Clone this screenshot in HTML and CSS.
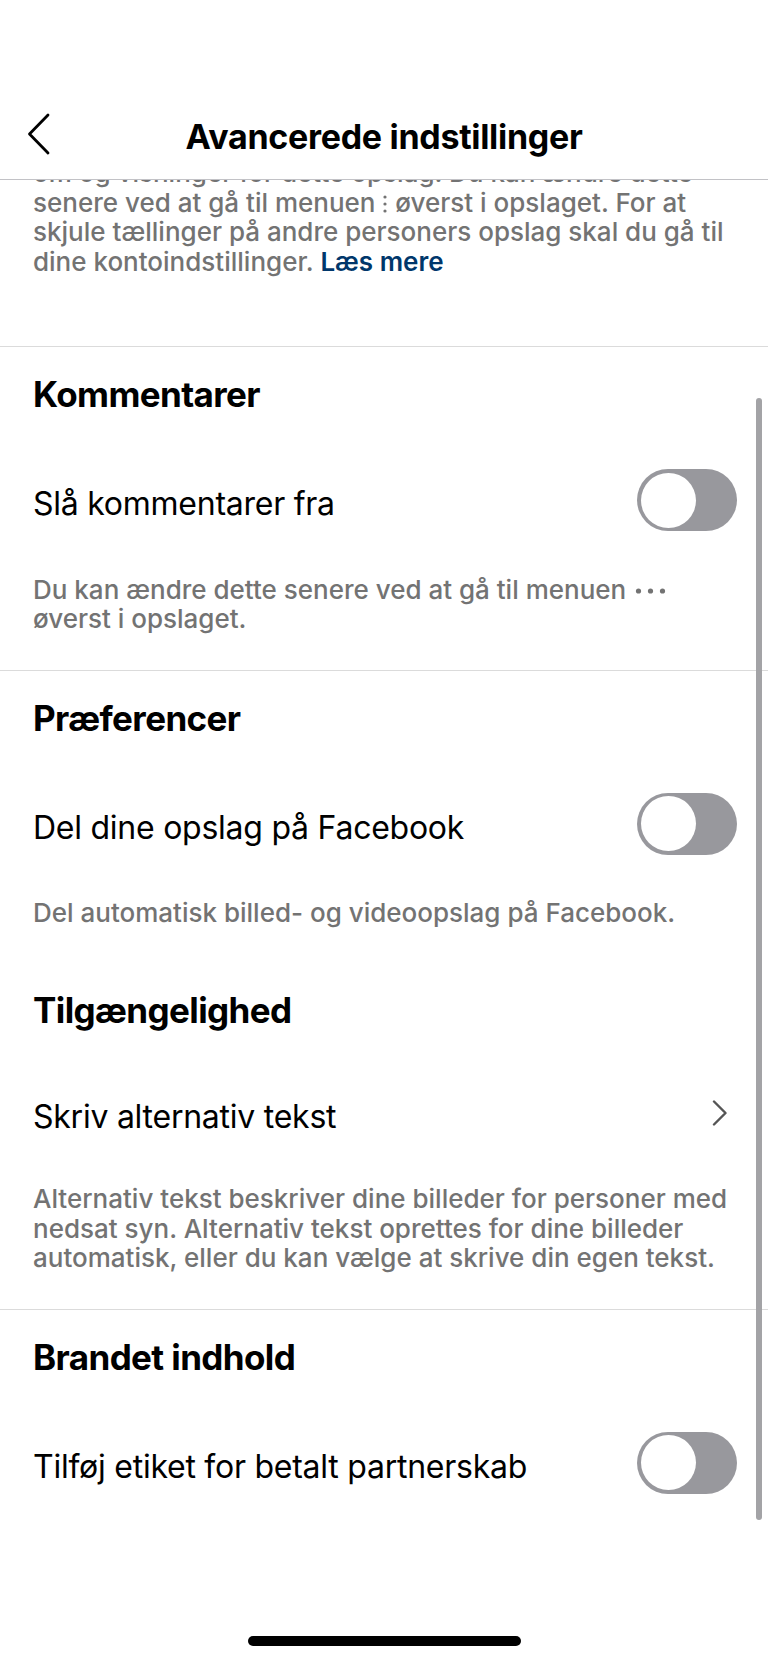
FILE: index.html
```html
<!DOCTYPE html>
<html lang="da">
<head>
<meta charset="utf-8">
<title>Avancerede indstillinger</title>
<link rel="stylesheet" href="styles.css">
</head>
<body>
<div class="screen">
  <div class="status"></div>
  <header class="nav">
    <div class="nav-side">
      <svg class="back" width="26" height="42" viewBox="0 0 26 42"><path d="M22 2 L3.5 21 L22 40" fill="none" stroke="#000" stroke-width="2.8" stroke-linecap="round" stroke-linejoin="round"/></svg>
    </div>
    <h1 class="nav-title">Avancerede indstillinger</h1>
    <div class="nav-side"></div>
  </header>

  <div class="intro">
    <p class="intro-text">om og visninger for dette opslag. Du kan ændre dette<br>senere ved at gå til menuen <svg class="vdots" width="6" height="20" viewBox="0 0 6 20"><circle cx="3" cy="3" r="1.6" fill="#737373"/><circle cx="3" cy="10" r="1.6" fill="#737373"/><circle cx="3" cy="17" r="1.6" fill="#737373"/></svg> øverst i opslaget. For at<br>skjule tællinger på andre personers opslag skal du gå til<br>dine kontoindstillinger. <a class="link">Læs mere</a></p>
  </div>

  <section class="section">
    <h2 class="heading">Kommentarer</h2>
    <div class="row">
      <span class="label">Slå kommentarer fra</span>
      <span class="toggle"><span class="knob"></span></span>
    </div>
    <p class="desc">Du kan ændre dette senere ved at gå til menuen <svg class="more" width="32" height="8" viewBox="0 0 32 8"><circle cx="3.5" cy="4" r="2.6" fill="#737373"/><circle cx="15.5" cy="4" r="2.6" fill="#737373"/><circle cx="27.5" cy="4" r="2.6" fill="#737373"/></svg><br>øverst i opslaget.</p>
  </section>

  <section class="section">
    <h2 class="heading">Præferencer</h2>
    <div class="row">
      <span class="label">Del dine opslag på Facebook</span>
      <span class="toggle"><span class="knob"></span></span>
    </div>
    <p class="desc">Del automatisk billed- og videoopslag på Facebook.</p>

    <h2 class="heading heading-sub">Tilgængelighed</h2>
    <div class="row row-link">
      <span class="label">Skriv alternativ tekst</span>
      <svg class="chev" width="16" height="26" viewBox="0 0 16 26"><path d="M2 1.5 L13.5 13 L2 24.5" fill="none" stroke="#555" stroke-width="2.4" stroke-linecap="round" stroke-linejoin="round"/></svg>
    </div>
    <p class="desc">Alternativ tekst beskriver dine billeder for personer med<br>nedsat syn. Alternativ tekst oprettes for dine billeder<br>automatisk, eller du kan vælge at skrive din egen tekst.</p>
  </section>

  <section class="section">
    <h2 class="heading">Brandet indhold</h2>
    <div class="row">
      <span class="label">Tilføj etiket for betalt partnerskab</span>
      <span class="toggle"><span class="knob"></span></span>
    </div>
  </section>

  <div class="scrollbar"></div>
  <div class="home-indicator"></div>
</div>
</body>
</html>
```

FILE: styles.css
```css
* { box-sizing: border-box; }

html, body {
  margin: 0;
  padding: 0;
  background: #ffffff;
}

body {
  font-family: Inter, "Noto Sans", "DejaVu Sans", sans-serif;
  color: #000;
}

.screen {
  position: relative;
  width: 768px;
  height: 1662px;
  overflow: hidden;
  background: #ffffff;
}

.status {
  height: 95px;
}

.nav {
  height: 85px;
  display: grid;
  grid-template-columns: 1fr auto 1fr;
  align-items: center;
  border-bottom: 1px solid #c2c2c6;
  padding: 0 26px;
}

.nav-side {
  display: flex;
  align-items: center;
}

.back {
  display: block;
  margin-top: -6px;
}

.nav-title {
  margin: 0;
  font-size: 34px;
  font-weight: 700;
  letter-spacing: -0.3px;
  line-height: 40px;
  color: #000;
  white-space: nowrap;
}

.intro {
  height: 166px;
  overflow: hidden;
  padding: 0 33px;
}

.intro-text {
  margin: -22px 0 0 0;
  font-size: 26px;
  line-height: 29.5px;
  font-weight: 500;
  color: #737373;
  white-space: nowrap;
}

.vdots {
  vertical-align: -2px;
}

.link {
  color: #00376b;
  font-weight: 600;
}

.section {
  border-top: 1px solid #dbdbdb;
  padding: 27px 31px 36px 33px;
}

.heading {
  margin: 0;
  font-size: 35px;
  line-height: 40px;
  font-weight: 700;
  letter-spacing: -0.6px;
  color: #000;
}

.heading-sub {
  margin-top: 62px;
}

.row {
  margin-top: 55px;
  height: 62px;
  display: flex;
  align-items: center;
  justify-content: space-between;
}

.row-link {
  height: 56px;
  padding-right: 9px;
}

.label {
  font-size: 32px;
  line-height: 36px;
  padding-top: 8px;
  letter-spacing: -0.25px;
  color: #000;
  white-space: nowrap;
}

.toggle {
  width: 100px;
  height: 62px;
  border-radius: 31px;
  background: #98989d;
  padding: 3.5px;
  display: flex;
  align-items: center;
  flex: none;
}

.knob {
  width: 55px;
  height: 55px;
  border-radius: 50%;
  background: #ffffff;
}

.chev {
  display: block;
  flex: none;
}

.desc {
  margin: 43.5px 0 0 0;
  font-size: 26px;
  line-height: 29.5px;
  font-weight: 500;
  color: #737373;
  white-space: nowrap;
}

.more {
  vertical-align: 4px;
  margin-left: 2px;
}

.scrollbar {
  position: absolute;
  left: 756px;
  top: 398px;
  width: 6px;
  height: 1122px;
  border-radius: 3px;
  background: #a3a3a6;
}

.home-indicator {
  position: absolute;
  left: 248px;
  top: 1636px;
  width: 273px;
  height: 10px;
  border-radius: 5px;
  background: #000;
}
```
